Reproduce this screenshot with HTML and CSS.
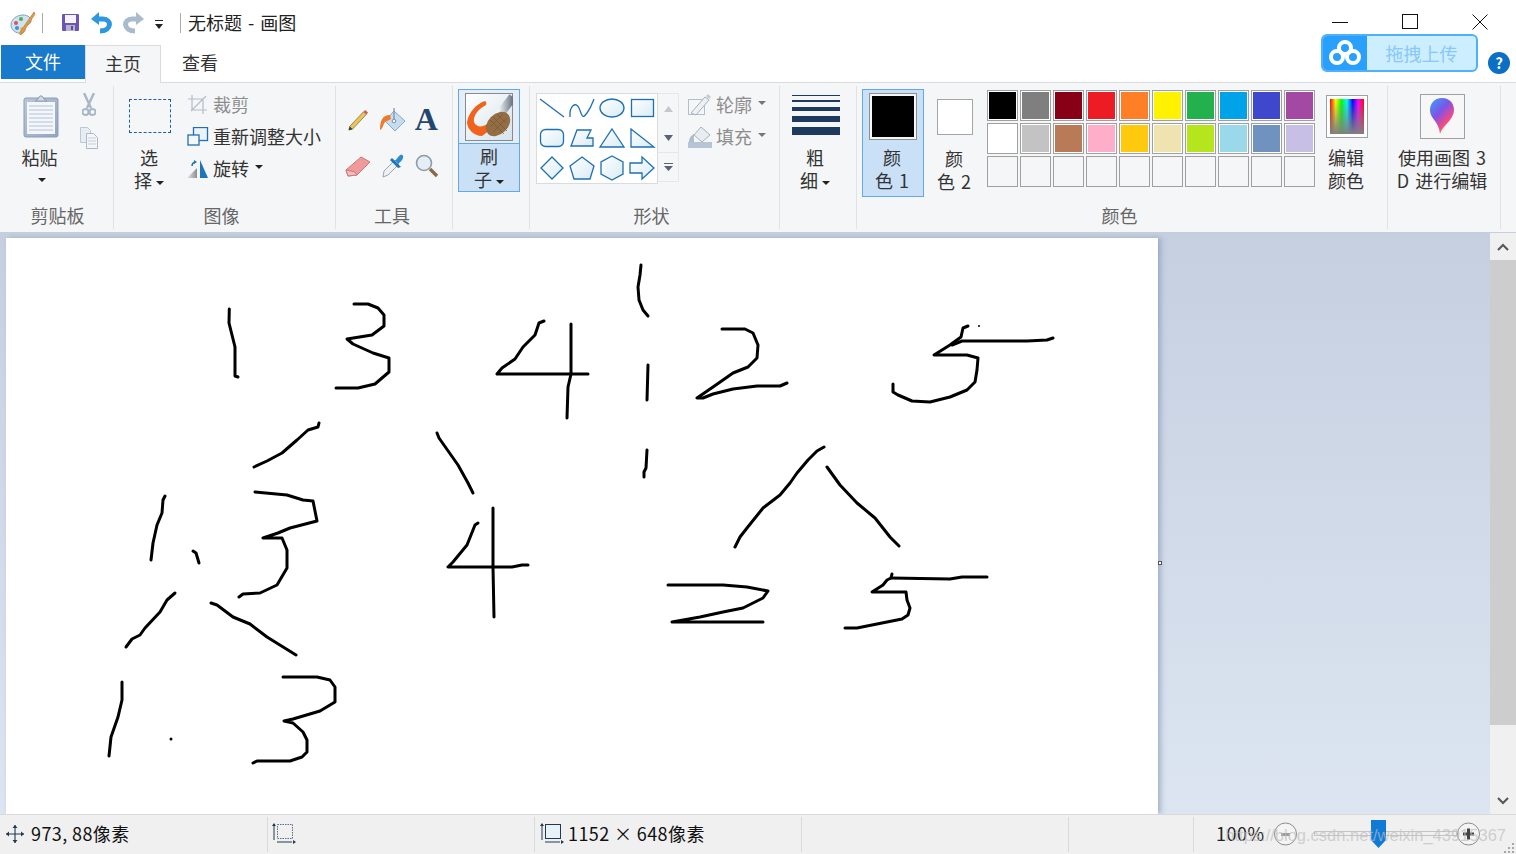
FILE: index.html
```html
<!DOCTYPE html>
<html lang="zh-CN">
<head>
<meta charset="utf-8">
<title>无标题 - 画图</title>
<link rel="stylesheet" href="styles.css">
</head>
<body>
<svg class="defs" width="0" height="0" aria-hidden="true">
  <defs>
    <linearGradient id="shapeFill" x1="0" y1="0" x2="1" y2="1"><stop offset="0" stop-color="#ffffff"/><stop offset="1" stop-color="#d8ecf5"/></linearGradient>
    <linearGradient id="p3d" x1="0.1" y1="0" x2="0.8" y2="1"><stop offset="0" stop-color="#3f9cf5"/><stop offset="0.4" stop-color="#7a55e8"/><stop offset="0.7" stop-color="#f0478c"/><stop offset="1" stop-color="#f8a020"/></linearGradient>
    <linearGradient id="rot" x1="0" y1="0" x2="1" y2="0"><stop offset="0" stop-color="#e5e5e5"/><stop offset="1" stop-color="#8f8f8f"/></linearGradient>
    <linearGradient id="brushBg" x1="0" y1="0" x2="1" y2="1"><stop offset="0" stop-color="#ffffff"/><stop offset="1" stop-color="#d5e3ea"/></linearGradient>
    <linearGradient id="handle" x1="0" y1="0" x2="1" y2="0"><stop offset="0" stop-color="#eef2f6"/><stop offset="1" stop-color="#66717f"/></linearGradient>
    <linearGradient id="clipFill" x1="0" y1="0" x2="1" y2="1"><stop offset="0" stop-color="#b9c7da"/><stop offset="1" stop-color="#93a5bf"/></linearGradient>
  </defs>
</svg>
<div class="app">
  <header class="titlebar">
    <svg class="qa-app" width="26" height="24" viewBox="0 0 26 24"><path d="M1 14C1 8 7 4 13 4c5 0 9 3 8 7-1 3-5 2-6 5 0 3 1 5-3 6-6 1-11-3-11-8z" fill="#cfe2f1" stroke="#7fa3c0"/><circle cx="6" cy="12" r="2" fill="#e94f4f"/><circle cx="11" cy="8" r="2" fill="#4caf50"/><circle cx="7" cy="17" r="2" fill="#3f8fdc"/><circle cx="12" cy="18" r="1.8" fill="#e8b62c"/><path d="M24 1l1 2-13 20-2 1 0-3z" fill="#ea9a3a" stroke="#b26f22" stroke-width=".6"/></svg>
    <span class="qa-sep"></span>
    <svg class="qa-save" width="17" height="17" viewBox="0 0 17 17"><rect width="17" height="17" rx="1" fill="#6b56b4"/><rect x="3" y="1" width="11" height="8" fill="#f4f3fa"/><rect x="4" y="11" width="9" height="6" fill="#b9b4c9"/><rect x="9" y="12" width="2" height="4" fill="#5c4a9c"/></svg>
    <svg class="qa-undo" width="21" height="22" viewBox="0 0 21 22"><path d="M5 7h7c9 0 9 12-3 12" fill="none" stroke="#2f97e0" stroke-width="5"/><path d="M0 7L8 0v13z" fill="#2f97e0"/></svg>
    <svg class="qa-redo" width="21" height="22" viewBox="0 0 21 22"><path d="M16 7H9C0 7 0 19 12 19" fill="none" stroke="#a9bccd" stroke-width="5"/><path d="M21 7l-8-7v13z" fill="#a9bccd"/></svg>
    <svg class="qa-more" width="11" height="10" viewBox="0 0 11 10"><rect x="1" width="8" height="1" fill="#222"/><path d="M1 4h8L5 9z" fill="#222"/></svg>
    <span class="qa-sep qa-sep-title"></span>
    <span class="title-text">无标题 - 画图</span>
    <div class="win-controls">
      <svg width="16" height="16" viewBox="0 0 16 16"><path d="M0 8.5h16" stroke="#111"/></svg>
      <svg width="16" height="16" viewBox="0 0 16 16"><rect x=".5" y=".5" width="15" height="14" fill="none" stroke="#111"/></svg>
      <svg width="16" height="16" viewBox="0 0 16 16"><path d="M.5.5l15 15m0-15l-15 15" stroke="#111" fill="none"/></svg>
    </div>
  </header>

  <nav class="tabs">
    <span class="tab tab-file">文件</span>
    <span class="tab tab-home">主页</span>
    <span class="tab tab-view">查看</span>
    <div class="upload">
      <span class="upload-logo"><svg width="32" height="26" viewBox="0 0 32 26"><g fill="none" stroke="#fff" stroke-width="4"><circle cx="16" cy="8" r="6"/><circle cx="8" cy="17" r="6"/><circle cx="24" cy="17" r="6"/></g></svg></span>
      <span class="upload-text">拖拽上传</span>
    </div>
    <span class="help">?</span>
  </nav>

  <section class="ribbon">
    <div class="group g-clip">
      <div class="group-body">
        <div class="large-btn paste-btn">
          <div class="icon-slot paste-slot">
            <svg width="36" height="43" viewBox="0 0 36 43"><rect x="1" y="3" width="34" height="39" rx="2" fill="url(#clipFill)" stroke="#8d9db5"/><rect x="4" y="7" width="28" height="32" fill="#f3f6fa"/><g stroke="#b4c3d6"><path d="M6 11h24M6 15h24M6 19h24M6 23h24M6 27h24M6 31h24M6 35h24"/></g><path d="M12 6l3-2 2-3h2l2 3 3 2z" fill="#d3dbe6" stroke="#8d9db5"/></svg>
          </div>
          <div class="btn-label">粘贴</div>
          <span class="caret caret-block"></span>
        </div>
        <div class="mini-col">
          <svg width="14" height="24" viewBox="0 0 14 24"><path d="M2 0l7 15M12 0L5 15" stroke="#a9b6c6" stroke-width="2.4" fill="none"/><circle cx="3.5" cy="19" r="3" fill="none" stroke="#a9b6c6" stroke-width="2"/><circle cx="10.5" cy="19" r="3" fill="none" stroke="#a9b6c6" stroke-width="2"/></svg>
          <svg width="18" height="22" viewBox="0 0 18 22"><path d="M.5.5h7l3 3v12H.5z" fill="#e8edf3" stroke="#bcc8d6"/><path d="M6.5 6.5h7l4 4v11h-11z" fill="#f4f6f9" stroke="#aab9ca"/><path d="M8 11h8M8 14h8M8 17h8" stroke="#c3cfdb"/></svg>
        </div>
      </div>
      <div class="group-label">剪贴板</div>
    </div>

    <div class="group g-image">
      <div class="group-body">
        <div class="large-btn select-btn">
          <div class="icon-slot select-slot"><span class="select-box"></span></div>
          <div class="btn-label">选</div>
          <div class="btn-label">择<span class="caret"></span></div>
        </div>
        <div class="small-col">
          <div class="small-row disabled">
            <svg width="22" height="22" viewBox="0 0 22 22"><path d="M5 1v15h15M1 5h15v15M4 17L19 2" fill="none" stroke="#b4bdc9" stroke-width="1.2"/></svg>
            <span>裁剪</span>
          </div>
          <div class="small-row">
            <svg width="22" height="20" viewBox="0 0 22 20"><rect x="6.5" y=".5" width="14" height="13" fill="#e9f3f8" stroke="#1f6fb5" stroke-width="1.3"/><rect x="1" y="8" width="11" height="10" fill="#f5f6f7" stroke="#1f6fb5" stroke-width="1.3"/></svg>
            <span>重新调整大小</span>
          </div>
          <div class="small-row">
            <svg width="22" height="20" viewBox="0 0 22 20"><path d="M0 19L10 9v10z" fill="url(#rot)"/><path d="M13 1l8 18h-8z" fill="#1d75b8"/><path d="M5 7q0-3 3-4" fill="none" stroke="#1d75b8" stroke-width="1.4"/><path d="M7 1l3 2-3 2z" fill="#1d75b8"/></svg>
            <span>旋转</span><span class="caret"></span>
          </div>
        </div>
      </div>
      <div class="group-label">图像</div>
    </div>

    <div class="group g-tools">
      <div class="group-body tool-grid">
        <svg width="22" height="24" viewBox="0 0 24 24"><path d="M3 19L18 3l3 3L6 22l-4 1z" fill="#eac35a" stroke="#7d6a3a" stroke-width=".8"/><path d="M18 3l2-2 3 3-2 2z" fill="#d9585a"/><path d="M2 23l1-4 3 3z" fill="#333"/></svg>
        <svg width="26" height="26" viewBox="0 0 26 26"><path d="M14 4l11 10-10 10L5 14z" fill="#c6dcef" stroke="#84a9c9"/><path d="M14 1v13" stroke="#7b8ea3" stroke-width="1.2"/><circle cx="14" cy="14" r="1.8" fill="#fff" stroke="#7b8ea3"/><path d="M10 8C3 8 0 13 0 23c3-1 3-6 5-8l6-3z" fill="#f0792a"/></svg>
        <span class="tool-a">A</span>
        <svg width="26" height="22" viewBox="0 0 26 22"><path d="M1 15L16 2l9 5-13 13-9 1z" fill="#f09a9a" stroke="#c77a7a"/><path d="M1 15l9 2 2 3-9 1z" fill="#f7bcbc" stroke="#c77a7a"/></svg>
        <svg width="24" height="24" viewBox="0 0 24 24"><path d="M14 6l4 4L7 21l-5 2 1-6z" fill="#eef0f3" stroke="#9aa5b1"/><path d="M11 4l9 9-3 1-8-8z" fill="#1d75b8"/><path d="M14 7l4-5q3-3 4 0t-5 8z" fill="#2b8bd0"/></svg>
        <svg width="24" height="24" viewBox="0 0 24 24"><circle cx="9" cy="9" r="7.5" fill="#e4eef7" stroke="#909aa5" stroke-width="1.6"/><path d="M15 15l7 7" stroke="#8a6a48" stroke-width="3.4"/></svg>
      </div>
      <div class="group-label">工具</div>
    </div>

    <div class="group g-brush">
      <div class="brush-btn">
        <div class="brush-top">
          <svg width="48" height="48" viewBox="0 0 48 48"><rect x=".5" y=".5" width="47" height="47" fill="url(#brushBg)" stroke="#8a8a8a"/><path d="M48 4L34 22" stroke="url(#handle)" stroke-width="9"/><path d="M20 8C11 11 4 19 2 29c0 7 7 14 15 14l8-6-3-6c-5 4-11 3-13-2-1-6 4-13 12-17 1-2 0-3-1-4z" fill="#f0631f"/><ellipse cx="33" cy="31" rx="10" ry="14" transform="rotate(45 33 31)" fill="#946d44"/><g stroke="#7a5733" stroke-width=".7"><path d="M25 27l14 14M28 24l14 14M32 21l9 9M25 34l13-13M28 39l14-14"/></g></svg>
        </div>
        <div class="brush-text">
          <div class="btn-label">刷</div>
          <div class="btn-label">子<span class="caret"></span></div>
        </div>
      </div>
    </div>

    <div class="group g-shapes">
      <div class="group-body">
        <div class="gallery">
          <svg class="shape" viewBox="0 1 30 30"><path d="M3 6l24 18" class="stroke-only"/></svg>
          <svg class="shape" viewBox="0 1 30 30"><path d="M3 24C2 13 9 8 12 15s3 12 8 5 6-12 7-14" class="stroke-only"/></svg>
          <svg class="shape" viewBox="0 1 30 30"><ellipse cx="15" cy="15" rx="12" ry="9"/></svg>
          <svg class="shape" viewBox="0 1 30 30"><rect x="4.5" y="6.5" width="22" height="17"/></svg>
          <svg class="shape" viewBox="0 1 30 30"><rect x="3.5" y="6.5" width="23" height="17" rx="5"/></svg>
          <svg class="shape" viewBox="0 1 30 30"><path d="M4 23L10 7h14l-4 8h6v8z"/></svg>
          <svg class="shape" viewBox="0 1 30 30"><path d="M15 6l12 18H3z"/></svg>
          <svg class="shape" viewBox="0 1 30 30"><path d="M4 6l23 18H4z"/></svg>
          <svg class="shape" viewBox="0 1 30 30"><path d="M15 4l11 11-11 11L4 15z"/></svg>
          <svg class="shape" viewBox="0 1 30 30"><path d="M15 4l12 9-4 13H7L3 13z"/></svg>
          <svg class="shape" viewBox="0 1 30 30"><path d="M15 3l11 6v12l-11 6-11-6V9z"/></svg>
          <svg class="shape" viewBox="0 1 30 30"><path d="M3 10h12V4l12 11-12 11v-6H3z"/></svg>
        </div>
        <div class="gallery-scroll">
          <span class="gs-cell"><svg width="9" height="6" viewBox="0 0 9 6"><path d="M4.500 0L9 6H0z" fill="#c4c8cd"/></svg></span>
          <span class="gs-cell"><svg width="9" height="6" viewBox="0 0 9 6"><path d="M0 0h9L4.500 6z" fill="#5a6470"/></svg></span>
          <span class="gs-cell gs-last"><svg width="9" height="8" viewBox="0 0 9 8"><path d="M0 0h9v1H0zM0 3h9L4.500 8z" fill="#5a6470"/></svg></span>
        </div>
        <div class="small-col outline-col">
          <div class="small-row disabled">
            <svg width="24" height="22" viewBox="0 0 24 22"><rect x=".5" y="5.500" width="16" height="15" fill="none" stroke="#b4bdc9"/><path d="M3 19L17 3l4 3L8 21z" fill="#eef1f4" stroke="#a6b0bc"/><path d="M18 2l2-2 3 3-2 2z" fill="#c3ccd6"/></svg>
            <span>轮廓</span><span class="caret caret-grey"></span>
          </div>
          <div class="small-row disabled">
            <svg width="24" height="22" viewBox="0 0 24 22"><path d="M13 1l9 8-8 7-8-7z" fill="#e8edf2" stroke="#a6b0bc"/><path d="M6 8C2 10 1 13 1 16h5z" fill="#b3bdc9"/><rect y="16" width="24" height="6" fill="#b7c4d5"/></svg>
            <span>填充</span><span class="caret caret-grey"></span>
          </div>
        </div>
      </div>
      <div class="group-label">形状</div>
    </div>

    <div class="group g-size">
      <div class="group-body">
        <div class="large-btn size-btn">
          <div class="icon-slot size-lines">
            <span class="sl sl1"></span><span class="sl sl2"></span><span class="sl sl3"></span><span class="sl sl4"></span><span class="sl sl5"></span>
          </div>
          <div class="btn-label size-label">粗</div>
          <div class="btn-label size-label">细<span class="caret"></span></div>
        </div>
      </div>
    </div>

    <div class="group g-colors">
      <div class="group-body">
        <div class="color-btn active">
          <span class="color-frame big"><span class="color-fill black"></span></span>
          <div class="btn-label">颜</div>
          <div class="btn-label">色 1</div>
        </div>
        <div class="color-btn">
          <span class="color-frame small"></span>
          <div class="btn-label">颜</div>
          <div class="btn-label">色 2</div>
        </div>
        <div class="palette">
          <span class="swatch"><i class="c-000"></i></span><span class="swatch"><i class="c-7f7"></i></span><span class="swatch"><i class="c-880"></i></span><span class="swatch"><i class="c-ed1"></i></span><span class="swatch"><i class="c-f72"></i></span><span class="swatch"><i class="c-ff2"></i></span><span class="swatch"><i class="c-22b"></i></span><span class="swatch"><i class="c-00a"></i></span><span class="swatch"><i class="c-3f4"></i></span><span class="swatch"><i class="c-a34"></i></span>
          <span class="swatch"><i class="c-fff"></i></span><span class="swatch"><i class="c-c3c"></i></span><span class="swatch"><i class="c-b97"></i></span><span class="swatch"><i class="c-fae"></i></span><span class="swatch"><i class="c-fc0"></i></span><span class="swatch"><i class="c-efe"></i></span><span class="swatch"><i class="c-b5e"></i></span><span class="swatch"><i class="c-99d"></i></span><span class="swatch"><i class="c-709"></i></span><span class="swatch"><i class="c-c8b"></i></span>
          <span class="swatch empty"></span><span class="swatch empty"></span><span class="swatch empty"></span><span class="swatch empty"></span><span class="swatch empty"></span><span class="swatch empty"></span><span class="swatch empty"></span><span class="swatch empty"></span><span class="swatch empty"></span><span class="swatch empty"></span>
        </div>
        <div class="large-btn edit-btn">
          <div class="icon-slot edit-slot"><span class="rainbow"><span class="rainbow-fill"></span></span></div>
          <div class="btn-label">编辑</div>
          <div class="btn-label">颜色</div>
        </div>
      </div>
      <div class="group-label">颜色</div>
    </div>

    <div class="group g-p3d">
      <div class="group-body">
        <div class="large-btn p3d-btn">
          <div class="icon-slot">
            <span class="p3d-frame"><svg width="26" height="38" viewBox="0 0 26 38"><path d="M13 1C5 1 1 7 1 13c0 9 9 11 10 24 2-8 14-14 14-24C25 7 21 1 13 1z" fill="url(#p3d)"/></svg></span>
          </div>
          <div class="btn-label">使用画图 3</div>
          <div class="btn-label">D 进行编辑</div>
        </div>
      </div>
    </div>
  </section>

  <main class="workspace">
    <div class="canvas-area">
      <div class="canvas">
        <svg class="drawing" width="1152" height="576" viewBox="6 238 1152 576">
          <g fill="none" stroke="#000" stroke-width="3" stroke-linejoin="round" stroke-linecap="round">
            <path d="M229.300 309L229 323 235 347 235 376 238 377"/>
            <path d="M354 304H368L378 308 384 315 384 326 372 335 347 339 353 344 373 353 389 358 389 372 375 384 358 388H336"/>
            <path d="M544 321L539 323 535 335 523 347 515 359 502 368 497 374H588"/>
            <path d="M571 324V374L568 387 567 418"/>
            <path d="M319 423L318 427 308 430 297 440 282 453 267 461 254 467"/>
            <path d="M437 433L439 438 458 465 468 483 473 493"/>
            <path d="M641 265L640 275 638 287 639 300 643 310 648 316"/>
            <path d="M648 365L647 400"/>
            <path d="M647 450L646 468 644 472V477"/>
            <path d="M722 329H745L753 333 758 345 757 358 748 367 733 373 713 387 697 398 703 398 713 394 733 389 757 386H780L787 383"/>
            <path d="M968 326L963 328 961 337 950 345 934 355H967L978 358 977 370 975 382 967 390 950 397 930 402 912 401 898 395 893 392V384"/>
            <path d="M952 345L962 341H1027L1047 340 1053 338"/>
            <path d="M824 447L817 451 808 460 797 473 790 483 780 495 763 508 747 528 740 537 735 547"/>
            <path d="M827 467L840 485 857 503 875 518 890 537 899 546"/>
            <path d="M668 585H723L747 587 768 591 763 598 743 608 723 612 700 617 672 622H763"/>
            <path d="M892 574L891 578 887 580 883 585 872 592H906L907 600 910 608 908 615 902 619 877 624 857 628H845"/>
            <path d="M891 578L950 579 962 577H987"/>
            <path d="M165 496L163 500 162 513 157 525 153 543 151 560"/>
            <path d="M193 551L196 553 199 563"/>
            <path d="M255 492L287 495 303 500 313 501 317 521 290 528 278 533 263 538H282L287 550V568L277 585 260 593 243 594 239 597"/>
            <path d="M478 523L475 525 467 545 453 562 448 567H512L522 565H528"/>
            <path d="M493 508V567L494 617"/>
            <path d="M175 593L167 600 160 612 145 628 140 635 132 639 126 647"/>
            <path d="M211 603L217 605 233 617 250 624 267 637 296 655"/>
            <path d="M122 682V700L118 717 111 737 109 756"/>
            <path d="M283 677H317L330 680 335 687V702L320 711 293 719 284 721 293 723 303 732 307 740V752L302 757 290 761H257L253 763"/>
          </g>
          <circle cx="171" cy="739" r="1.500" fill="#000"/>
          <circle cx="979" cy="326" r="1" fill="#000"/>
        </svg>
      </div>
      <span class="handle"></span>
    </div>
    <div class="vscroll">
      <span class="vs-btn"><svg width="12" height="8" viewBox="0 0 12 8"><path d="M1 7l5-5 5 5" fill="none" stroke="#555" stroke-width="2"/></svg></span>
      <span class="vs-thumb"></span>
      <span class="vs-space"></span>
      <span class="vs-btn"><svg width="12" height="8" viewBox="0 0 12 8"><path d="M1 1l5 5 5-5" fill="none" stroke="#555" stroke-width="2"/></svg></span>
    </div>
  </main>

  <footer class="status">
    <div class="st-cell st-first">
      <svg width="18" height="18" viewBox="0 0 18 18"><path d="M9 0v18M0 9h18" stroke="#24384f" stroke-width="1.100"/><path d="M9 0l2.500 3h-5zM9 18l2.500-3h-5zM0 9l3-2.500v5zM18 9l-3-2.500v5z" fill="#24384f"/></svg>
      <span class="st-text">973, 88像素</span>
    </div>
    <div class="st-cell st-sel">
      <svg width="24" height="22" viewBox="0 0 24 22"><path d="M2 1v16M20 19H5" stroke="#24384f"/><path d="M2 0l2 3H0zM24 19l-3-2v4z" fill="#24384f"/><rect x="5.500" y="1.500" width="15" height="14" fill="none" stroke="#5a6f86" stroke-dasharray="1.500 1"/></svg>
    </div>
    <div class="st-cell st-size">
      <svg width="24" height="22" viewBox="0 0 24 22"><path d="M2 1v16M20 19H5" stroke="#24384f"/><path d="M2 0l2 3H0zM24 19l-3-2v4z" fill="#24384f"/><rect x="5.500" y="1.500" width="15" height="14" fill="#e6f2f7" stroke="#24384f"/></svg>
      <span class="st-text">1152 × 648像素</span>
    </div>
    <div class="st-cell"></div>
    <div class="st-cell st-short"></div>
    <div class="st-zoom">
      <span class="zoom-pct">100%</span>
      <span class="zoom-btn"><svg width="23" height="24" viewBox="0 0 23 24"><circle cx="11.500" cy="12" r="11" fill="#f4f4f4" stroke="#8c8c8c"/><path d="M7 12.500h9" stroke="#9a9a9a" stroke-width="3"/></svg></span>
      <span class="slider"><span class="slider-track"></span>
        <svg class="slider-thumb" width="15" height="28" viewBox="0 0 15 28"><path d="M0 0h15v20l-7.500 8L0 20z" fill="#0f7bd6"/></svg>
      </span>
      <span class="zoom-btn"><svg width="23" height="24" viewBox="0 0 23 24"><circle cx="11.500" cy="12" r="11" fill="#f4f4f4" stroke="#8c8c8c"/><path d="M6 12h11M11.500 6.500v11" stroke="#444" stroke-width="3"/></svg></span>
    </div>
    <span class="watermark">https://blog.csdn.net/weixin_43915367</span>
    <svg class="grip" width="10" height="10" viewBox="0 0 10 10"><path d="M8 0h2v2H8zM4 4h2v2H4zM8 4h2v2H8zM0 8h2v2H0zM4 8h2v2H4zM8 8h2v2H8z" fill="#a8a8a8"/></svg>
  </footer>
</div>
</body>
</html>
```
FILE: styles.css
```css
* { box-sizing: border-box; }
html, body { margin: 0; padding: 0; }
body {
  width: 1516px;
  height: 854px;
  overflow: hidden;
  background: #fff;
  color: #333;
  font-family: "Noto Sans CJK SC", "Noto Sans", sans-serif;
  font-size: 18px;
  line-height: 23px;
}
.defs { position: absolute; }
svg { display: block; flex: none; }
.app { display: flex; flex-direction: column; width: 1516px; height: 854px; }

/* title bar */
.titlebar { display: flex; align-items: center; height: 45px; padding-left: 10px; background: #fff; color: #222; }
.qa-sep { width: 1px; height: 20px; background: #aaa; margin-left: 6px; }
.qa-save { margin-left: 19px; }
.qa-undo { margin-left: 12px; }
.qa-redo { margin-left: 11px; }
.qa-more { margin-left: 10px; margin-top: 5px; }
.qa-sep-title { margin-left: 15px; }
.title-text { margin-left: 7px; word-spacing: 2px; }
.win-controls { display: flex; gap: 54px; margin-left: auto; margin-right: 28px; margin-top: -1px; }

/* tabs */
.tabs { position: relative; display: flex; align-items: flex-start; height: 38px; border-bottom: 1px solid #dadbdc; padding-left: 1px; }
.tab { display: flex; align-items: center; justify-content: center; height: 34px; }
.tab-file { width: 84px; background: #1979ca; color: #fff; padding-bottom: 2px; }
.tab-home { width: 76px; height: 38px; background: #f5f6f7; border: 1px solid #dadbdc; border-bottom: 0; padding-bottom: 2px; }
.tab-view { width: 78px; height: 37px; padding-bottom: 2px; }
.upload { position: absolute; left: 1321px; top: -11px; display: flex; width: 157px; height: 38px; border: 2px solid #4fb0fb; border-radius: 6px; overflow: hidden; background: #cdeeff; }
.upload-logo { display: flex; align-items: center; justify-content: center; width: 44px; background: #29a0fd; }
.upload-text { flex: 1; text-align: center; line-height: 34px; color: #86c8fb; }
.help { position: absolute; left: 1488px; top: 7px; width: 22px; height: 22px; border-radius: 50%; background: #0b6fc4; color: #fff; font-size: 15px; line-height: 22px; text-align: center; font-weight: 700; }

/* ribbon */
.ribbon { display: flex; height: 149px; padding: 3px 0 3px; background: #f5f6f7; border-bottom: 0; }
.group { display: flex; flex-direction: column; flex: none; border-right: 1px solid #e1e2e3; }
.group-body { display: flex; flex: 1; min-height: 0; }
.group-label { height: 25px; line-height: 22px; text-align: center; color: #666; }
.g-clip { width: 114px; }
.g-clip .group-label { padding-left: 2px; }
.g-image { width: 222px; }
.g-image .group-label { padding-right: 6px; }
.g-tools { width: 117px; }
.g-tools .group-label { padding-right: 4px; }
.g-brush { width: 77px; padding: 3px 0 0 5px; }
.g-shapes { width: 250px; }
.g-shapes .group-label { padding-right: 6px; }
.g-size { width: 77px; }
.g-colors { width: 531px; }
.g-colors .group-label { padding-right: 5px; }
.g-p3d { width: 113px; }

.large-btn { display: flex; flex-direction: column; align-items: center; flex: none; }
.icon-slot { display: flex; align-items: center; justify-content: center; height: 60px; width: 100%; }
.btn-label { text-align: center; white-space: nowrap; }
.caret { display: inline-block; width: 0; height: 0; border: 4px solid transparent; border-top-color: #222; border-bottom: 0; margin-left: 4px; vertical-align: 3px; }
.caret-block { display: block; margin: 9px 0 0 4px; }
.caret-grey { border-top-color: #777; }

.paste-btn { width: 79px; }
.paste-slot { padding-left: 3px; }
.mini-col { display: flex; flex-direction: column; align-items: center; gap: 10px; width: 20px; padding-top: 7px; }

.select-btn { width: 70px; }
.select-slot { padding-left: 2px; }
.select-box { display: block; width: 42px; height: 34px; border: 1px dashed #1f5f9e; }
.small-col { display: flex; flex-direction: column; padding: 3px 0 0 3px; }
.small-row { display: flex; align-items: center; gap: 4px; height: 32px; padding-bottom: 1px; white-space: nowrap; color: #333; }
.small-row svg { width: 22px; }
.small-row .caret { margin-left: 2px; margin-top: -3px; vertical-align: 0; }
.disabled { color: #8d8d8d; }

.tool-grid { display: grid; grid-template-columns: repeat(3, 34.5px); grid-template-rows: repeat(2, 46px); padding: 11px 0 0 5px; align-content: start; justify-items: center; align-items: center; }
.tool-a { font-family: "Liberation Serif", serif; font-size: 32px; font-weight: 700; color: #24456f; line-height: 32px; margin-right: 2px; margin-top: -2px; }

.brush-btn { width: 62px; height: 103px; border: 1px solid #64a8e8; display: flex; flex-direction: column; }
.brush-top { height: 55px; padding: 3px 0 0 6px; background: #e4eefa; border-bottom: 1px solid #64a8e8; }
.brush-text { flex: 1; background: #c9e0f7; padding-top: 1px; }

.g-shapes .group-body { padding: 7px 0 0 6px; }
.gallery { display: grid; grid-template-columns: repeat(4, 30px); grid-auto-rows: 30px; align-content: start; width: 122px; height: 91px; background: #fff; border: 1px solid #dadbdc; }
.shape { width: 30px; height: 30px; fill: url(#shapeFill); stroke: #1f6fb5; stroke-width: 1.3; }
.shape .stroke-only { fill: none; }
.gallery-scroll { display: flex; flex-direction: column; width: 21px; height: 89px; border: 1px solid #e6e7e8; border-left: 0; }
.gs-cell { display: flex; flex: 1; align-items: center; justify-content: center; }
.gs-last { flex: none; height: 29px; border-top: 1px solid #e6e7e8; }
.outline-col { margin: -4px 0 0 9px; padding: 0; }
.outline-col .small-row { gap: 4px; }
.outline-col .small-row svg { width: 24px; }

.size-btn { width: 72px; }
.size-label { margin-right: 2px; }
.size-lines { flex-direction: column; align-items: center; justify-content: flex-start; padding-top: 9px; }
.sl { display: block; width: 48px; background: #1f3a5f; flex: none; }
.sl1 { height: 1px; }
.sl2 { height: 2px; margin-top: 4px; }
.sl3 { height: 4px; margin-top: 5px; }
.sl4 { height: 6px; margin-top: 5px; }
.sl5 { height: 8px; margin-top: 5px; }

.g-colors .group-body { padding: 3px 0 0 5px; }
.color-btn { display: flex; flex-direction: column; align-items: center; width: 62px; height: 108px; border: 1px solid transparent; flex: none; padding-top: 3px; word-spacing: 2px; }
.color-btn .btn-label { margin-right: 2px; }
.color-btn.active { background: #c9e0f7; border-color: #64a8e8; }
.color-frame { display: block; flex: none; }
.color-frame.big { width: 48px; height: 47px; margin-bottom: 6px; border: 1px solid #8f8f8f; padding: 2px; background: #f5f6f7; }
.color-frame.small { width: 36px; height: 36px; margin: 6px 0 12px; border: 1px solid #a5a5a5; background: #fff; }
.color-fill { display: block; width: 100%; height: 100%; }
.black { background: #000; }
.palette { display: grid; grid-template-columns: repeat(10, 31px); grid-auto-rows: 31px; column-gap: 2px; row-gap: 2px; margin: 1px 0 0 1px; height: 97px; }
.swatch { display: block; border: 1px solid #a0a0a0; padding: 1px; background: #fff; }
.swatch i { display: block; width: 100%; height: 100%; }
.swatch.empty { background: #f5f6f7; }
.c-000 { background: #000; } .c-7f7 { background: #7f7f7f; } .c-880 { background: #880015; } .c-ed1 { background: #ed1c24; } .c-f72 { background: #ff7f27; }
.c-ff2 { background: #fff200; } .c-22b { background: #22b14c; } .c-00a { background: #00a2e8; } .c-3f4 { background: #3f48cc; } .c-a34 { background: #a349a4; }
.c-fff { background: #fff; } .c-c3c { background: #c3c3c3; } .c-b97 { background: #b97a57; } .c-fae { background: #ffaec9; } .c-fc0 { background: #ffc90e; }
.c-efe { background: #efe4b0; } .c-b5e { background: #b5e61d; } .c-99d { background: #99d9ea; } .c-709 { background: #7092be; } .c-c8b { background: #c8bfe7; }
.edit-btn { width: 60px; margin: -3px 0 0 1px; }
.edit-slot { padding-left: 2px; }
.rainbow { display: block; width: 42px; height: 43px; padding: 3px; border: 1px solid #a0a0a0; background: #fff; }
.rainbow-fill { display: block; width: 100%; height: 100%; background: linear-gradient(to bottom, rgba(128,128,128,0), #808080), linear-gradient(to right, #f00, #ff0, #0f0, #0ff, #00f, #f0f, #f00); }

.p3d-btn { width: 108px; word-spacing: 2px; }
.p3d-frame { display: flex; align-items: center; justify-content: center; width: 45px; height: 45px; border: 1px solid #a0a0a0; background: #f7f7f7; }

/* workspace */
.workspace { display: flex; height: 582px; border-top: 1px solid #c5cedd; }
.canvas-area { position: relative; flex: 1; overflow: hidden; padding: 5px 0 0 6px; background: linear-gradient(to bottom, #c5cfe0, #dce5f1); }
.canvas { width: 1152px; height: 576px; background: #fff; box-shadow: 3px 0 5px rgba(120, 140, 175, .55); }
.handle { position: absolute; left: 1158px; top: 328px; width: 4px; height: 4px; background: #fff; border: 1px solid #555; }
.vscroll { display: flex; flex-direction: column; width: 26px; padding-top: 1px; background: #f0f0f0; }
.vs-btn { display: flex; align-items: center; justify-content: center; height: 26px; flex: none; }
.vs-thumb { height: 465px; background: #cdcdcd; flex: none; }
.vs-space { flex: 1; }

/* status */
.status { position: relative; display: flex; height: 40px; background: #f0f0f0; border-top: 1px solid #d9d9d9; color: #111; }
.st-cell { display: flex; align-items: center; gap: 8px; width: 267px; padding: 0 0 2px 6px; border-right: 1px solid #dadada; margin: 2px 0; flex: none; }
.st-first { width: 268px; gap: 7px; }
.st-sel { padding-left: 4px; }
.st-size { padding-left: 5px; gap: 4px; }
.st-short { width: 125px; }
.st-text { letter-spacing: .4px; }
.st-zoom { display: flex; align-items: center; flex: 1; padding-left: 22px; margin-top: -2px; }
.zoom-pct { width: 58px; color: #222; letter-spacing: .5px; }
.zoom-btn { flex: none; }
.slider { position: relative; display: block; width: 160px; height: 28px; flex: none; }
.slider-track { position: absolute; left: 17px; right: 0; top: 11px; height: 5px; border: 1px solid #c4c4c4; }
.slider-thumb { position: absolute; left: 74px; top: 0; }
.watermark { position: absolute; right: 10px; top: 9px; font-family: "Liberation Sans", sans-serif; font-size: 16.500px; color: rgba(190, 190, 190, .7); white-space: nowrap; }
.grip { position: absolute; right: 2px; bottom: 1px; }
```
